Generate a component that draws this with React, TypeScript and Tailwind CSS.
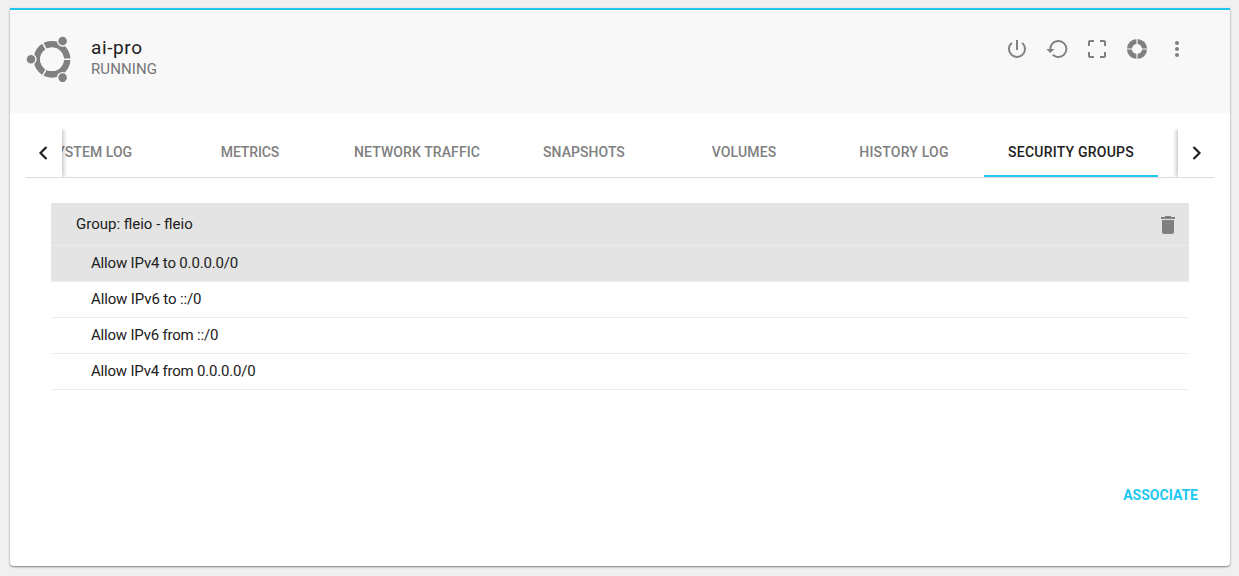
import type { ReactNode } from 'react';
import { MdPowerSettingsNew, MdCropFree, MdMoreVert, MdDelete } from 'react-icons/md';

const tabs = [
  { label: 'SYSTEM LOG', width: 'w-[160px]', text: 'tracking-[0.05px]' },
  { label: 'METRICS', width: 'w-[160px]', text: 'tracking-[-0.1px]' },
  { label: 'NETWORK TRAFFIC', width: 'w-[174px]', text: 'tracking-[0.1px]' },
  { label: 'SNAPSHOTS', width: 'w-[160px]', text: 'tracking-[0.05px]' },
  { label: 'VOLUMES', width: 'w-[160px]', text: 'tracking-[0.15px]' },
  { label: 'HISTORY LOG', width: 'w-[160px]', text: 'tracking-[0.2px]' },
  { label: 'SECURITY GROUPS', width: 'w-[174px]', text: 'tracking-[0.22px]', active: true },
];

const rules = [
  { label: 'Allow IPv4 to 0.0.0.0/0', text: 'tracking-[-0.17px]', active: true },
  { label: 'Allow IPv6 to ::/0', text: 'tracking-[-0.13px]' },
  { label: 'Allow IPv6 from ::/0', text: 'tracking-[-0.2px]' },
  { label: 'Allow IPv4 from 0.0.0.0/0', text: 'tracking-[-0.2px]' },
];

function UbuntuLogo() {
  return (
    <svg width="56" height="56" viewBox="0 0 56 56" fill="#808080">
      <circle cx="30" cy="27.3" r="15.1" fill="none" stroke="#808080" strokeWidth="6.6" />
      <path d="M30 27.3H50M30 27.3L20 10M30 27.3L20 44.6" stroke="#f8f8f8" strokeWidth="1.5" />
      <g stroke="#f8f8f8" strokeWidth="1.4">
        <circle cx="9" cy="27.3" r="5" />
        <circle cx="40.6" cy="9" r="5" />
        <circle cx="40.6" cy="45.6" r="5" />
      </g>
      <circle cx="30" cy="27.3" r="11.8" fill="#f8f8f8" />
    </svg>
  );
}

function RestoreIcon() {
  return (
    <svg width="24" height="24" viewBox="0 0 24 24" fill="currentColor">
      <path d="M13 3c-4.97 0-9 4.03-9 9H1l3.89 3.89.07.14L9 12H6c0-3.87 3.13-7 7-7s7 3.13 7 7-3.13 7-7 7c-1.93 0-3.68-.79-4.94-2.06l-1.42 1.42C8.27 19.99 10.51 21 13 21a9 9 0 0 0 0-18z" transform="translate(.4 0)" />
    </svg>
  );
}

function SupportIcon() {
  return (
    <svg width="24" height="24" viewBox="0 0 24 24" fill="none">
      <circle cx="12" cy="12" r="7.6" stroke="currentColor" strokeWidth="5" />
      <path d="M12 1v22M1 12h22" stroke="#f8f8f8" strokeWidth="1.2" />
    </svg>
  );
}

function Chevron({ d }: { d: string }) {
  return (
    <svg width="12" height="18" viewBox="0 0 12 18" fill="none" stroke="#212121" strokeWidth="2.2">
      <path d={d} />
    </svg>
  );
}

function Action({ children, label }: { children: ReactNode; label: string }) {
  return (
    <button aria-label={label} className="flex size-10 items-center justify-center">
      {children}
    </button>
  );
}

export default function App() {
  return (
    <div className="h-[576px] w-[1239px] overflow-hidden bg-[#f0f0f0] px-[10px] pt-2 font-['Roboto',sans-serif] text-[15px] text-[#212121]">
      <main className="h-[558px] w-[1220px] overflow-hidden rounded-b-[4px] border-t-2 border-[#1ec8f0] bg-white shadow-[0_1px_2px_rgba(0,0,0,0.5)]">
        <header className="flex h-[103px] items-start bg-[#f8f8f8] pr-[33px] pl-3">
          <div className="pt-[22px]">
            <UbuntuLogo />
          </div>
          <div className="flex-1 pt-[26px] pl-[13px] whitespace-nowrap">
            <h1 className="text-[19px] leading-6 tracking-[0.6px]">ai-pro</h1>
            <p className="-mt-px text-[15px] leading-5 tracking-[0.1px] text-[#757575]">RUNNING</p>
          </div>
          <div className="flex pt-[19px] text-[#808080]">
            <Action label="Power"><MdPowerSettingsNew size={24} /></Action>
            <Action label="Restart"><RestoreIcon /></Action>
            <Action label="Resize"><MdCropFree size={24} /></Action>
            <Action label="Rescue"><SupportIcon /></Action>
            <Action label="More"><MdMoreVert size={24} /></Action>
          </div>
        </header>

        <nav className="mx-4 mt-4 flex h-[49px] overflow-hidden border-b border-[#dddddd]">
          <button aria-label="Previous" className="z-10 flex w-[36px] shrink-0 items-center justify-center bg-white pr-[2px] shadow-[1px_0_5px_rgba(0,0,0,0.3)]">
            <Chevron d="M9.5 3L3.5 9l6 6" />
          </button>
          <div className="flex min-w-0 flex-1 overflow-hidden">
            <div className="-ml-[52px] flex shrink-0">
              {tabs.map((t) => (
                <button
                  key={t.label}
                  className={`${t.width} h-12 shrink-0 border-b-2 pt-px text-[14px] font-medium whitespace-nowrap ${t.active ? 'border-[#1ec8f0]' : 'border-transparent text-[#808080]'}`}
                >
                  <span className={t.text}>{t.label}</span>
                </button>
              ))}
            </div>
          </div>
          <button aria-label="Next" className="z-10 flex w-[36px] shrink-0 items-center justify-center bg-white shadow-[-1px_0_5px_rgba(0,0,0,0.3)]">
            <Chevron d="M3.5 3l6 6-6 6" />
          </button>
        </nav>

        <section className="mx-[41px] mt-[25px]">
          <div className="flex h-[43px] items-center justify-between border-b border-[#ececec] bg-[#e4e4e4] pr-[9px] pl-[25px]">
            <span>Group: fleio - fleio</span>
            <button aria-label="Delete" className="pt-[2px]"><MdDelete size={24} color="#808080" /></button>
          </div>
          {rules.map((r) => (
            <div key={r.label} className={`flex h-9 items-center border-b border-[#ececec] pl-10 ${r.active ? 'bg-[#e4e4e4]' : ''}`}>
              <span className={r.text}>{r.label}</span>
            </div>
          ))}
        </section>

        <footer className="mt-[93px] flex justify-end pr-8">
          <button className="text-[14px] leading-6 font-bold text-[#1ec8f0]">ASSOCIATE</button>
        </footer>
      </main>
    </div>
  );
}
